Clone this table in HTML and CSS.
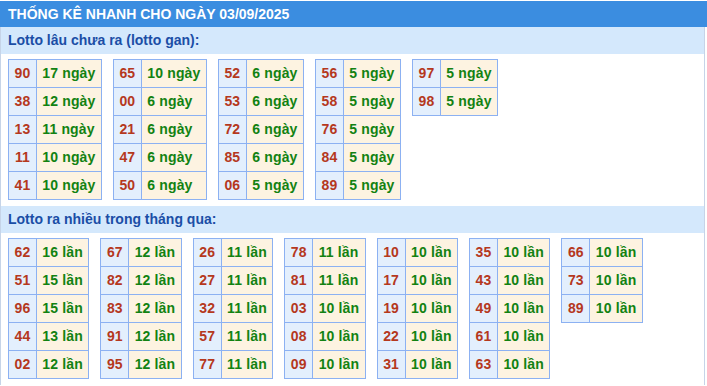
FILE: index.html
```html
<!DOCTYPE html>
<html lang="vi">
<head>
<meta charset="utf-8">
<title>Thống kê nhanh</title>
<link rel="stylesheet" href="styles.css">
</head>
<body>
<div class="title">THỐNG KÊ NHANH CHO NGÀY 03/09/2025</div>
<div class="box">
  <div class="sub">Lotto lâu chưa ra (lotto gan):</div>
  <div class="tables">
    <table class="t"><tr><td class="n">90</td><td class="v">17 ngày</td></tr><tr><td class="n">38</td><td class="v">12 ngày</td></tr><tr><td class="n">13</td><td class="v">11 ngày</td></tr><tr><td class="n">11</td><td class="v">10 ngày</td></tr><tr><td class="n">41</td><td class="v">10 ngày</td></tr></table>
    <table class="t"><tr><td class="n">65</td><td class="v">10 ngày</td></tr><tr><td class="n">00</td><td class="v">6 ngày</td></tr><tr><td class="n">21</td><td class="v">6 ngày</td></tr><tr><td class="n">47</td><td class="v">6 ngày</td></tr><tr><td class="n">50</td><td class="v">6 ngày</td></tr></table>
    <table class="t"><tr><td class="n">52</td><td class="v">6 ngày</td></tr><tr><td class="n">53</td><td class="v">6 ngày</td></tr><tr><td class="n">72</td><td class="v">6 ngày</td></tr><tr><td class="n">85</td><td class="v">6 ngày</td></tr><tr><td class="n">06</td><td class="v">5 ngày</td></tr></table>
    <table class="t"><tr><td class="n">56</td><td class="v">5 ngày</td></tr><tr><td class="n">58</td><td class="v">5 ngày</td></tr><tr><td class="n">76</td><td class="v">5 ngày</td></tr><tr><td class="n">84</td><td class="v">5 ngày</td></tr><tr><td class="n">89</td><td class="v">5 ngày</td></tr></table>
    <table class="t"><tr><td class="n">97</td><td class="v">5 ngày</td></tr><tr><td class="n">98</td><td class="v">5 ngày</td></tr></table>
  </div>
  <div class="sub">Lotto ra nhiều trong tháng qua:</div>
  <div class="tables">
    <table class="t"><tr><td class="n">62</td><td class="v">16 lần</td></tr><tr><td class="n">51</td><td class="v">15 lần</td></tr><tr><td class="n">96</td><td class="v">15 lần</td></tr><tr><td class="n">44</td><td class="v">13 lần</td></tr><tr><td class="n">02</td><td class="v">12 lần</td></tr></table>
    <table class="t"><tr><td class="n">67</td><td class="v">12 lần</td></tr><tr><td class="n">82</td><td class="v">12 lần</td></tr><tr><td class="n">83</td><td class="v">12 lần</td></tr><tr><td class="n">91</td><td class="v">12 lần</td></tr><tr><td class="n">95</td><td class="v">12 lần</td></tr></table>
    <table class="t"><tr><td class="n">26</td><td class="v">11 lần</td></tr><tr><td class="n">27</td><td class="v">11 lần</td></tr><tr><td class="n">32</td><td class="v">11 lần</td></tr><tr><td class="n">57</td><td class="v">11 lần</td></tr><tr><td class="n">77</td><td class="v">11 lần</td></tr></table>
    <table class="t"><tr><td class="n">78</td><td class="v">11 lần</td></tr><tr><td class="n">81</td><td class="v">11 lần</td></tr><tr><td class="n">03</td><td class="v">10 lần</td></tr><tr><td class="n">08</td><td class="v">10 lần</td></tr><tr><td class="n">09</td><td class="v">10 lần</td></tr></table>
    <table class="t"><tr><td class="n">10</td><td class="v">10 lần</td></tr><tr><td class="n">17</td><td class="v">10 lần</td></tr><tr><td class="n">19</td><td class="v">10 lần</td></tr><tr><td class="n">22</td><td class="v">10 lần</td></tr><tr><td class="n">31</td><td class="v">10 lần</td></tr></table>
    <table class="t"><tr><td class="n">35</td><td class="v">10 lần</td></tr><tr><td class="n">43</td><td class="v">10 lần</td></tr><tr><td class="n">49</td><td class="v">10 lần</td></tr><tr><td class="n">61</td><td class="v">10 lần</td></tr><tr><td class="n">63</td><td class="v">10 lần</td></tr></table>
    <table class="t"><tr><td class="n">66</td><td class="v">10 lần</td></tr><tr><td class="n">73</td><td class="v">10 lần</td></tr><tr><td class="n">89</td><td class="v">10 lần</td></tr></table>
  </div>
</div>
</body>
</html>
```
FILE: styles.css
```css
html, body {
  margin: 0;
  padding: 0;
  background: #ffffff;
}
body {
  font-family: "Liberation Sans", Arial, sans-serif;
  font-weight: bold;
  font-size: 14px;
  padding-top: 1px;
}
.title {
  background: #3b8de0;
  color: #ffffff;
  height: 26px;
  line-height: 26px;
  padding-left: 8px;
  font-size: 14px;
}
.box {
  width: 703px;
  border-left: 1px solid #c6d4e8;
  border-right: 1px solid #c6d4e8;
}
.sub {
  background: #d4e8fc;
  color: #1b4ea6;
  height: 27px;
  line-height: 27px;
  padding-left: 7px;
}
.tables {
  display: flex;
  align-items: flex-start;
  gap: 11px;
  padding: 5px 0 6px 7px;
}
.t {
  border-collapse: collapse;
}
.t td {
  border: 1px solid #8cb1f2;
  height: 27px;
  padding: 0 5.5px;
  line-height: 27px;
  white-space: nowrap;
}
.t .n {
  background: #e3effd;
  color: #b5381d;
  text-align: center;
  letter-spacing: 0.1px;
}
.t .v {
  background: #fdf3e1;
  color: #128212;
  letter-spacing: 0.15px;
}
```
